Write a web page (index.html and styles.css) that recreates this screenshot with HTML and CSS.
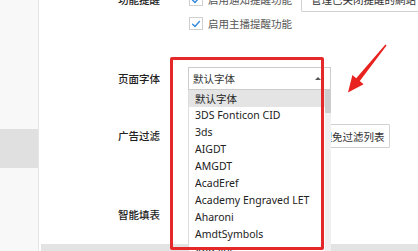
FILE: index.html
```html
<!DOCTYPE html>
<html lang="zh-CN">
<head>
<meta charset="utf-8">
<title>设置</title>
<link rel="stylesheet" href="styles.css">
</head>
<body>
<div class="app">
  <aside class="sidebar">
    <div class="side-item"></div>
    <div class="side-item"></div>
    <div class="side-item"></div>
    <div class="side-item"></div>
    <div class="side-item active"></div>
    <div class="side-item"></div>
    <div class="side-item"></div>
  </aside>
  <main class="content">
    <div class="settings">
      <section class="row row-remind">
        <div class="label label-first">功能提醒</div>
        <div class="controls">
          <div class="line line-first">
            <label class="check"><span class="box"><svg viewBox="0 0 12 12" width="12" height="12"><path d="M2.6 6.2 L5 8.4 L9.4 3.6" fill="none" stroke="#3d8ee0" stroke-width="1.5" stroke-linecap="round" stroke-linejoin="round"/></svg></span>启用通知提醒功能</label>
            <button class="btn btn-top">管理已关闭提醒的網站</button>
          </div>
          <div class="line">
            <label class="check"><span class="box"><svg viewBox="0 0 12 12" width="12" height="12"><path d="M2.6 6.2 L5 8.4 L9.4 3.6" fill="none" stroke="#3d8ee0" stroke-width="1.5" stroke-linecap="round" stroke-linejoin="round"/></svg></span>启用主播提醒功能</label>
          </div>
        </div>
      </section>
      <section class="row row-font">
        <div class="label">页面字体</div>
        <div class="controls">
          <div class="select">
            <span class="select-value">默认字体</span>
            <span class="caret"></span>
            <div class="dropdown">
              <ul class="options">
                <li class="selected">默认字体</li>
                <li>3DS Fonticon CID</li>
                <li>3ds</li>
                <li>AIGDT</li>
                <li>AMGDT</li>
                <li>AcadEref</li>
                <li>Academy Engraved LET</li>
                <li>Aharoni</li>
                <li>AmdtSymbols</li>
                <li>Andalus</li>
              </ul>
              <div class="vscroll"><div class="thumb"></div></div>
            </div>
          </div>
        </div>
      </section>
      <section class="row row-ad">
        <div class="label">广告过滤</div>
        <div class="controls">
          <button class="btn btn-ad">管理免过滤列表</button>
        </div>
      </section>
      <section class="row row-fill">
        <div class="label">智能填表</div>
        <div class="controls"></div>
      </section>
    </div>
    <div class="hscroll"></div>
  </main>
  <div class="annot-box"></div>
  <svg class="annot-arrow" viewBox="0 0 60 60" width="60" height="60">
    <polygon points="45.4,4.5 46.6,5.5 19.8,41 23.6,44.2 8,52.5 12.4,35 16.2,38.2" fill="#e8231f"/>
  </svg>
</div>
</body>
</html>
```

FILE: styles.css
```css
* { box-sizing: border-box; }
html, body {
  margin: 0;
  padding: 0;
  width: 418px;
  height: 251px;
  overflow: hidden;
  background: #ffffff;
}
body {
  font-family: "Noto Sans", "Noto Sans CJK SC", sans-serif;
  font-size: 10.5px;
  color: #333333;
}
.app {
  position: relative;
  display: flex;
  width: 418px;
  height: 251px;
}
.sidebar {
  width: 39px;
  flex: none;
  background: #f8f8f8;
  border-right: 1px solid #e6e6e6;
  display: flex;
  flex-direction: column;
  margin-top: -27px;
}
.side-item {
  height: 39px;
  flex: none;
}
.side-item.active {
  background: #e0e0e0;
}
.content {
  flex: 1;
  display: flex;
  flex-direction: column;
  height: 251px;
  min-width: 0;
}
.settings {
  flex: 1;
  min-height: 0;
  display: flex;
  flex-direction: column;
  margin-top: -13px;
}
.row {
  display: flex;
  align-items: flex-start;
  flex: none;
}
.label {
  width: 121px;
  flex: none;
  text-align: right;
  line-height: 23px;
  color: #222222;
  font-weight: 500;
  font-family: "Noto Sans CJK SC", sans-serif;
}
.label-first {
  line-height: 25px;
}
.controls {
  margin-left: 28px;
  display: flex;
  flex-direction: column;
  flex: 1;
  min-width: 0;
}
.line {
  display: flex;
  align-items: center;
  height: 23px;
  white-space: nowrap;
}
.line-first {
  height: 25px;
}
.check {
  display: flex;
  align-items: center;
  gap: 5px;
  margin-left: 1px;
  color: #555555;
  font-family: "Noto Sans CJK SC", sans-serif;
}
.box {
  width: 14px;
  height: 13px;
  border: 1px solid #cfcfcf;
  background: #ffffff;
  display: flex;
  align-items: center;
  justify-content: center;
}
.btn {
  font-family: "Noto Sans CJK SC", sans-serif;
  font-size: 10.5px;
  color: #333333;
  background: #ffffff;
  border: 1px solid #d2d2d2;
  border-radius: 1px;
  white-space: nowrap;
  padding: 0 6px;
}
.btn-top {
  height: 24px;
  margin-left: 9px;
  padding-left: 9px;
}
.row-font {
  margin-top: 32px;
}
.select {
  position: relative;
  width: 143px;
  height: 23px;
  border: 1px solid #cccccc;
  background: #ffffff;
  display: flex;
  align-items: center;
  padding-left: 4px;
  font-family: "Noto Sans CJK SC", sans-serif;
  color: #333333;
}
.select-value { flex: 1; }
.caret {
  width: 0;
  height: 0;
  border-left: 3px solid transparent;
  border-right: 3px solid transparent;
  border-bottom: 3px solid #555555;
  margin-right: 9px;
}
.dropdown {
  position: absolute;
  left: -1px;
  top: 22px;
  width: 143px;
  height: 170px;
  background: #ffffff;
  border-left: 1px solid #dedede;
  display: flex;
  z-index: 5;
}
.options {
  list-style: none;
  margin: 0;
  padding: 0;
  flex: 1;
  min-width: 0;
}
.options li {
  height: 17px;
  line-height: 17px;
  padding-left: 6px;
  color: #222222;
  white-space: nowrap;
  font-family: "Noto Sans", "Noto Sans CJK SC", sans-serif;
}
.options li.selected {
  background: #e4e4e4;
  font-family: "Noto Sans CJK SC", sans-serif;
}
.vscroll {
  width: 6px;
  flex: none;
  background: #f0f0f0;
}
.thumb {
  height: 23px;
  background: #cdcdcd;
}
.row-ad {
  margin-top: 34px;
}
.row-ad .label { line-height: 24px; }
.btn-ad {
  height: 24px;
  align-self: flex-start;
  margin-left: 117px;
  padding: 0 4px 0 5px;
}
.row-fill {
  margin-top: 55px;
}
.row-fill .label { line-height: 24px; }
.hscroll {
  height: 7px;
  flex: none;
  margin-left: 2px;
  background: #e3e3e3;
}
.annot-box {
  position: absolute;
  left: 170px;
  top: 57px;
  width: 154px;
  height: 193px;
  border: 3px solid #e5282a;
  border-radius: 2px;
  z-index: 10;
}
.annot-arrow {
  position: absolute;
  left: 340px;
  top: 40px;
  z-index: 10;
}
```
